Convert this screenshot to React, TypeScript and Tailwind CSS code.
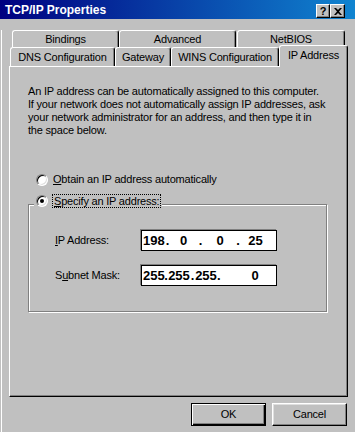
import React from 'react'

const tabBase =
  "flex items-center justify-center border-t border-l border-r border-white border-r-black rounded-t-[3px] shadow-[inset_-1px_0_0_#808080] bg-[#c0c0c0]"

function Tab({ label, w, selected = false }: { label: string; w: string; selected?: boolean }) {
  if (selected) {
    return (
      <div className={`${tabBase} ${w} relative z-10 -mt-[2px] h-[22px] pb-[2px]`}>
        {label}
      </div>
    )
  }
  return <div className={`${tabBase} ${w} h-full pt-[1px]`}>{label}</div>
}

function Radio({ checked = false }: { checked?: boolean }) {
  return (
    <div className="flex h-[12px] w-[12px] shrink-0 items-center justify-center rounded-full border border-t-[#808080] border-l-[#808080] border-r-white border-b-white bg-white shadow-[inset_1px_1px_0_#000,inset_-1px_-1px_0_#dfdfdf]">
      {checked && <div className="h-[4px] w-[4px] rounded-full bg-black" />}
    </div>
  )
}

function IpField({ cells }: { cells: { t: string; w: string; ml?: string }[] }) {
  return (
    <div className="flex h-[21px] w-[136px] items-center border border-black bg-white pl-[1px] font-['Liberation_Sans',Arial,sans-serif] text-[13px] font-bold tracking-normal shadow-[-1px_-1px_0_#808080]">
      {cells.map((c, i) => (
        <span key={i} className={`inline-block text-center ${c.w} ${c.ml ?? ''}`}>
          {c.t}
        </span>
      ))}
    </div>
  )
}

export default function App() {
  return (
    <div className="relative h-[432px] w-[355px] overflow-hidden bg-[#c0c0c0] font-['Liberation_Sans',Arial,sans-serif] text-[11px] leading-[13px] tracking-[-0.2px] text-black">
      {/* title bar */}
      <div className="flex h-[19px] items-start bg-[linear-gradient(to_right,#000080,#1084d0)] pl-[5px] pr-[10px]">
        <span className="pt-[3px] text-[12px] font-bold leading-[14px] tracking-normal text-white">TCP/IP Properties</span>
        <div className="ml-auto flex pt-[4px]">
          <div className="flex h-[14px] w-[14px] items-center justify-center border border-t-white border-l-white border-r-black border-b-black bg-[#c0c0c0] text-[11px] font-bold leading-none shadow-[inset_-1px_-1px_0_#808080]">
            ?
          </div>
          <div className="flex h-[14px] w-[15px] items-center justify-center border border-t-white border-l-white border-r-black border-b-black bg-[#c0c0c0] shadow-[inset_-1px_-1px_0_#808080]">
            <svg width="8" height="7" viewBox="0 0 8 7">
              <path d="M0 0h2l2 2 2-2h2L5 3.5 8 7H6L4 5 2 7H0l3-3.5z" fill="#000" />
            </svg>
          </div>
        </div>
      </div>

      {/* body */}
      <div className="ml-[1px] h-[413px] border-l border-white">
        {/* back row of tabs */}
        <div className="mt-[11px] flex h-[17px] pl-[10px]">
          <Tab label="Bindings" w="w-[107px]" />
          <Tab label="Advanced" w="w-[117px]" />
          <div className="ml-[1px] h-full">
            <Tab label="NetBIOS" w="w-[108px]" />
          </div>
        </div>

        {/* front row of tabs */}
        <div className="flex h-[19px] items-start pl-[8px]">
          <div className="flex h-[19px]">
            <Tab label="DNS Configuration" w="w-[105px]" />
            <Tab label="Gateway" w="w-[56px]" />
            <Tab label="WINS Configuration" w="w-[108px]" />
          </div>
          <Tab label="IP Address" w="w-[69px]" selected />
        </div>

        {/* panel */}
        <div className="relative ml-[7px] h-[331px] w-[339px] border border-white border-r-black border-b-black pl-[18px] pt-[18px] shadow-[inset_-1px_-1px_0_#808080]">
          <p>
            An IP address can be automatically assigned to this computer.
            <br />
            If your network does not automatically assign IP addresses, ask
            <br />
            your network administrator for an address, and then type it in
            <br />
            the space below.
          </p>

          <div className="mt-[36px] flex h-[13px] items-center gap-[5px] pl-[8px]">
            <Radio />
            <span>
              <span className="underline underline-offset-1">O</span>btain an IP address automatically
            </span>
          </div>

          <div className="relative mt-[18px] h-[108px] w-[299px] border border-[#808080] shadow-[inset_1px_1px_0_#fff,1px_1px_0_#fff]">
            <div className="absolute -top-[11px] left-[5px] flex h-[13px] items-center gap-[4px] bg-[#c0c0c0] pl-[2px] pr-[1px]">
              <Radio checked />
              <span className="border border-dotted border-black px-[1px] leading-[12px]">
                <span className="underline underline-offset-1">S</span>pecify an IP address:
              </span>
            </div>

            <div className="flex flex-col gap-[14px] pl-[26px] pt-[25px]">
              <div className="flex items-center">
                <span className="w-[86px]">
                  <span className="underline underline-offset-1">I</span>P Address:
                </span>
                <IpField
                  cells={[
                    { t: '198', w: 'w-[21px]' },
                    { t: '.', w: 'w-[7px]' },
                    { t: '0', w: 'w-[25px]' },
                    { t: '.', w: 'w-[9px]' },
                    { t: '0', w: 'w-[30px]' },
                    { t: '.', w: 'w-[6px]' },
                    { t: '25', w: 'w-[29px]' },
                  ]}
                />
              </div>
              <div className="flex items-center">
                <span className="w-[86px]">
                  S<span className="underline underline-offset-1">u</span>bnet Mask:
                </span>
                <IpField
                  cells={[
                    { t: '255', w: 'w-[21px]' },
                    { t: '.', w: 'w-[4px]' },
                    { t: '255', w: 'w-[22px]' },
                    { t: '.', w: 'w-[5px]' },
                    { t: '255', w: 'w-[22px]' },
                    { t: '.', w: 'w-[2px]' },
                    { t: '0', w: 'w-[42px]', ml: 'ml-[15px]' },
                  ]}
                />
              </div>
            </div>
          </div>
        </div>

        {/* buttons */}
        <div className="mt-[6px] flex gap-[6px] pl-[189px]">
          <button className="h-[23px] w-[75px] border border-black bg-[#c0c0c0] shadow-[inset_1px_1px_0_#fff,inset_-1px_-1px_0_#000,inset_-2px_-2px_0_#808080]">
            OK
          </button>
          <button className="h-[23px] w-[75px] border border-white border-r-black border-b-black bg-[#c0c0c0] shadow-[inset_-1px_-1px_0_#808080,inset_1px_1px_0_#dfdfdf]">
            Cancel
          </button>
        </div>
      </div>
    </div>
  )
}
